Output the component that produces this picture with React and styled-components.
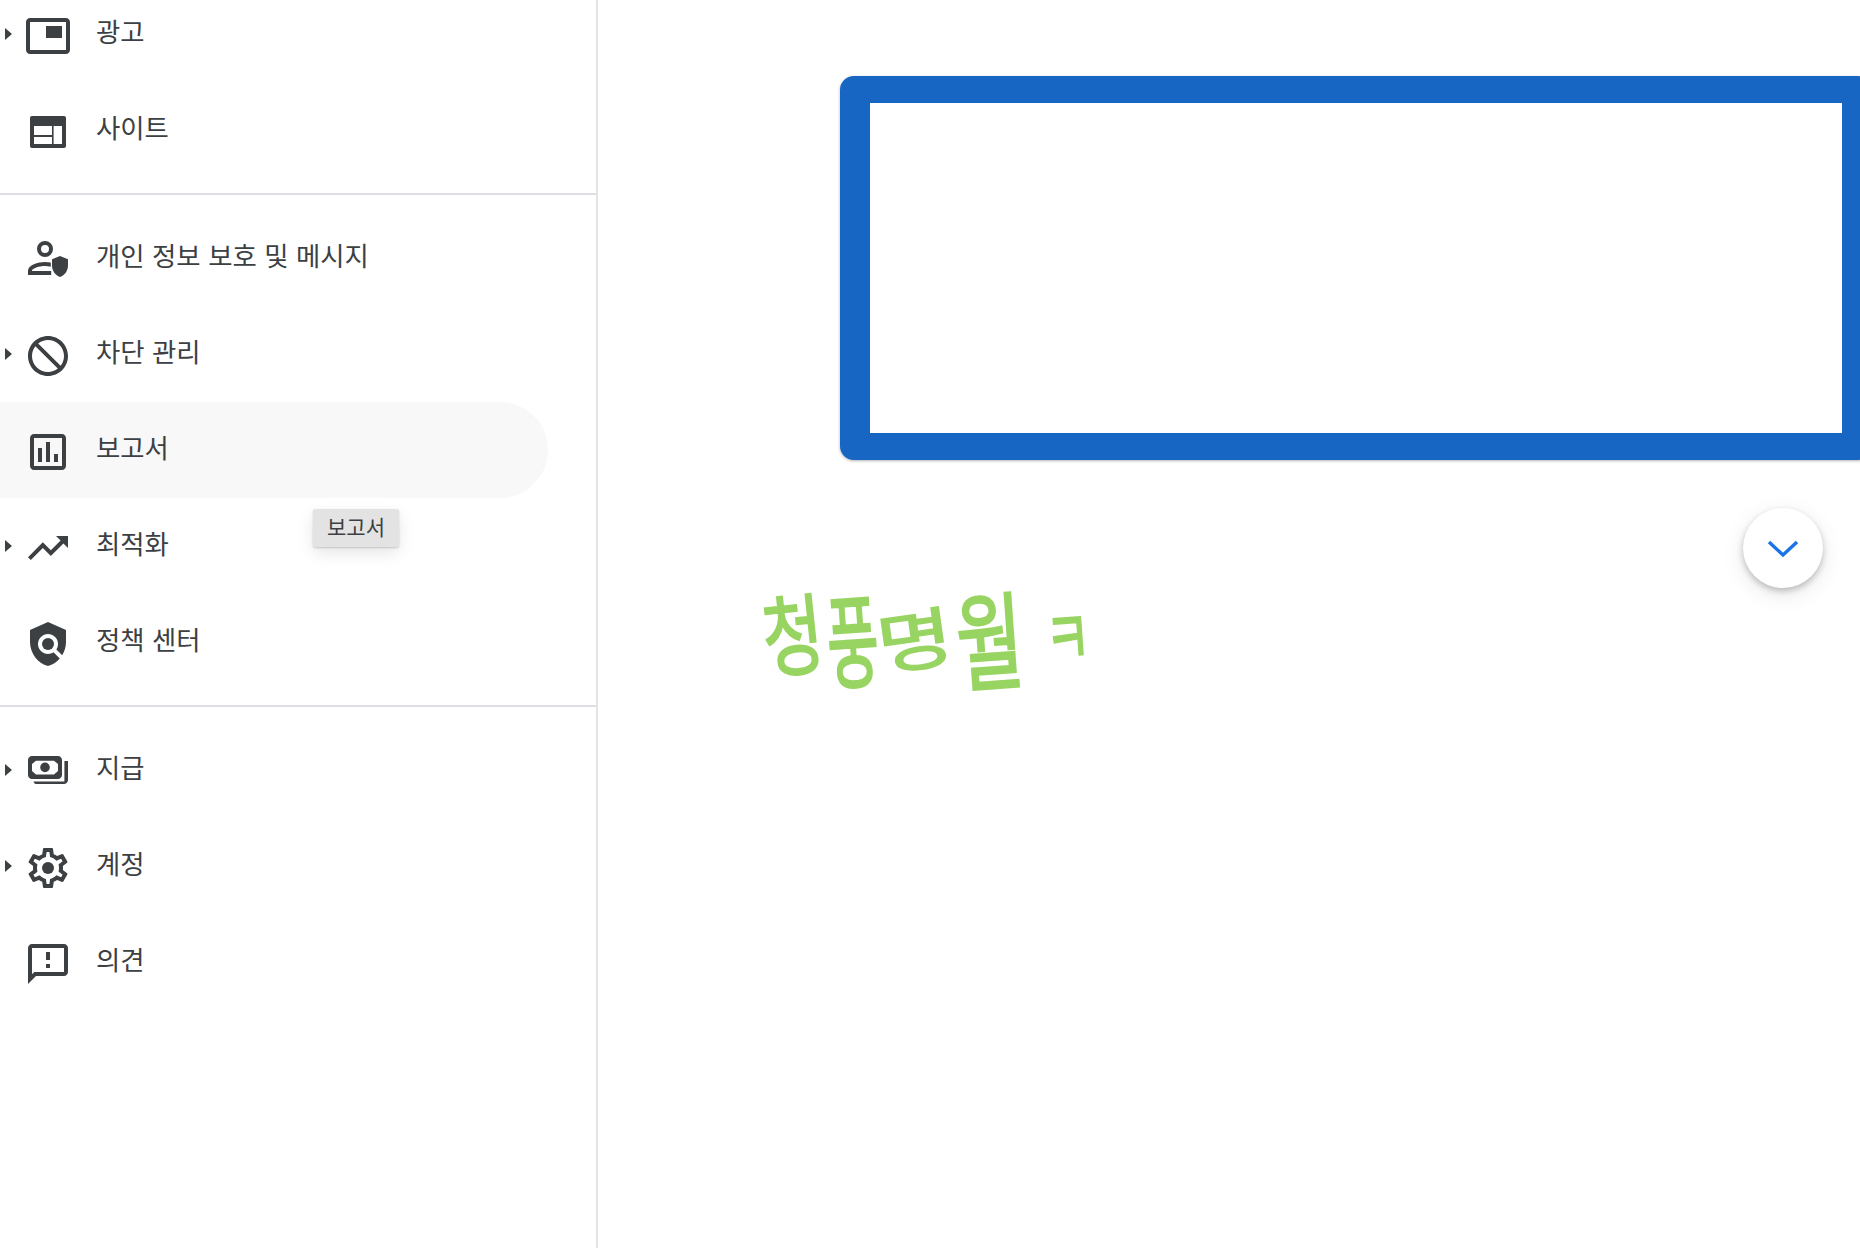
import React from "react";
import styled, { createGlobalStyle } from "styled-components";

const GlobalStyle = createGlobalStyle`
  html, body {
    margin: 0;
    height: 100%;
    background: #fff;
    overflow: hidden;
  }
  * {
    box-sizing: border-box;
  }
`;

const Page = styled.div`
  display: flex;
  width: 1860px;
  height: 1248px;
  overflow: hidden;
  font-family: "Noto Sans CJK KR", "Noto Sans", sans-serif;
  color: #3c4043;
`;
const Sidebar = styled.nav`
  flex: 0 0 598px;
  height: 100%;
  border-right: 2px solid #e3e4e8;
`;
// the page is scrolled a little, the first row is cut by the top edge
const Scrolled = styled.div`
  margin-top: -14px;
`;
const Divider = styled.hr`
  margin: 15px 0;
  border: 0;
  height: 2px;
  background: #dedde3;
`;
const Row = styled.a`
  position: relative;
  display: flex;
  align-items: center;
  width: 548px;
  height: 96px;
  padding-left: 5px;
  border-radius: 0 48px 48px 0;
  background: ${(p) => (p.$hover ? "#f8f8f8" : "transparent")};
`;
const ArrowSlot = styled.span`
  flex: 0 0 19px;
  height: 12px;
`;
const Arrow = styled.span`
  display: block;
  width: 0;
  height: 0;
  border-style: solid;
  border-width: 6px 0 6px 7px;
  border-color: transparent transparent transparent #3c4043;
`;
const Icon = styled.svg`
  flex: 0 0 48px;
  width: 48px;
  height: 48px;
  margin-top: 4px;
  fill: #3c4043;
`;
const Label = styled.span`
  margin-left: 24px;
  padding-bottom: 6px;
  font-size: 26.4px;
  line-height: 36px;
  word-spacing: 1.6px;
  white-space: nowrap;
`;
const Tooltip = styled.div`
  position: absolute;
  top: 107px;
  left: 313px;
  width: 86px;
  height: 38px;
  border-radius: 2px;
  background: #e3e3e3;
  box-shadow: 0 1px 2px rgba(0, 0, 0, 0.18), 0 6px 16px rgba(0, 0, 0, 0.1);
  font-size: 21px;
  line-height: 35px;
  text-align: center;
`;
const Main = styled.main`
  position: relative;
  flex: 1;
  padding: 76px 0 0 164px;
  overflow: hidden;
`;
const BlueBox = styled.div`
  width: 1032px;
  height: 384px;
  margin-left: 78px;
  border-style: solid;
  border-color: #1866c3;
  border-width: 27px 30px;
  border-radius: 14px;
  background: #fff;
  box-shadow: 0 1px 3px rgba(0, 0, 0, 0.3);
`;
const Fab = styled.button`
  position: absolute;
  top: 508px;
  right: 37px;
  display: flex;
  align-items: center;
  justify-content: center;
  width: 80px;
  height: 80px;
  padding: 0;
  border: 0;
  border-radius: 50%;
  background: #fff;
  box-shadow: 0 3px 6px rgba(0, 0, 0, 0.22), 0 6px 22px rgba(0, 0, 0, 0.1);
`;
const Scribble = styled.div`
  display: flex;
  align-items: center;
  height: 120px;
  margin-top: 112px;
  color: #98d462;
  font-size: 66px;
  font-weight: 400;
  line-height: 1;
  white-space: nowrap;
  -webkit-text-stroke: 1.5px #98d462;
`;
const Stroke = styled.span`
  display: inline-block;
  margin-left: ${(p) => p.$gap}px;
  transform: translateY(${(p) => p.$dy}px) rotate(${(p) => p.$rot}deg)
    scale(${(p) => p.$sx}, ${(p) => p.$sy});
`;

const paths = {
  ads: <path d="M19 7h-8v6h8V7zm2-4H3c-1.1 0-2 .9-2 2v14c0 1.1.9 1.98 2 1.98h18c1.1 0 2-.88 2-1.98V5c0-1.1-.9-2-2-2zm0 16.01H3V4.98h18v14.03z" />,
  site: (
    <path
      fillRule="evenodd"
      d="M4 4h16c.6 0 1 .4 1 1v14c0 .6-.4 1-1 1H4c-.6 0-1-.4-1-1V5c0-.6.4-1 1-1zm1 5v4.5h9V9H5zm0 5.5V18h9v-3.5H5zM14.8 9v9H19V9h-4.2z"
    />
  ),
  privacy: (
    <>
      <path
        fillRule="evenodd"
        d="M10.5 2.5a4 4 0 1 1 0 8 4 4 0 0 1 0-8zm0 2a2 2 0 1 0 0 4 2 2 0 0 0 0-4z"
      />
      <path d="M2 19.5v-2.2c0-2.7 5-4.3 8.5-4.3.9 0 1.9.1 2.9.3v2.1c-1-.3-2-.4-2.9-.4-3 0-6.5 1.2-6.5 2.3v.2h9.6v2H2z" />
      <path d="M18 10l4 1.6v3.2c0 2.7-1.7 5-4 5.7-2.3-.7-4-3-4-5.7v-3.2l4-1.6z" />
    </>
  ),
  block: (
    <path
      transform="matrix(-1 0 0 1 24 0)"
      d="M12 2C6.48 2 2 6.48 2 12s4.48 10 10 10 10-4.48 10-10S17.52 2 12 2zM4 12c0-4.42 3.58-8 8-8 1.85 0 3.55.63 4.9 1.69L5.69 16.9C4.63 15.55 4 13.85 4 12zm8 8c-1.85 0-3.55-.63-4.9-1.69L18.31 7.1C19.37 8.45 20 10.15 20 12c0 4.42-3.58 8-8 8z"
    />
  ),
  report: <path d="M19 3H5c-1.1 0-2 .9-2 2v14c0 1.1.9 2 2 2h14c1.1 0 2-.9 2-2V5c0-1.1-.9-2-2-2zm0 16H5V5h14v14zM7 10h2v7H7zm4-3h2v10h-2zm4 6h2v4h-2z" />,
  trend: <path d="M16 6l2.29 2.29-4.88 4.88-4-4L2 16.59 3.41 18l6-6 4 4 6.3-6.29L22 12V6z" />,
  policy: (
    <>
      <path d="M21 5l-9-4-9 4v6c0 5.55 3.84 10.74 9 12 2.3-.56 4.33-1.9 5.88-3.71l-3.12-3.12c-1.94 1.29-4.58 1.07-6.29-.64-1.95-1.95-1.95-5.12 0-7.07 1.95-1.95 5.12-1.95 7.07 0 1.71 1.71 1.92 4.35.64 6.29l2.9 2.9C20.29 15.69 21 13.38 21 11V5z" />
      <circle cx="12" cy="12" r="3" />
    </>
  ),
  payment: (
    <>
      <path
        fillRule="evenodd"
        d="M4 4h13c1.1 0 2 .9 2 2v7.5c0 1.1-.9 2-2 2H4c-1.1 0-2-.9-2-2V6c0-1.1.9-2 2-2zm2 2.4L4 8v3.5l2 1.7h9l2-1.7V8l-2-1.6H6zM10.5 7.3a2.4 2.4 0 1 1 0 4.8 2.4 2.4 0 0 1 0-4.8z"
      />
      <path d="M20.2 6.5H22V16c0 1.1-.9 2-2 2H6.5c-.9 0-1.6-.5-1.8-1.3h15.5V6.5z" />
    </>
  ),
  account: (
    <>
      <path d="M19.43 12.98c.04-.32.07-.64.07-.98 0-.34-.03-.66-.07-.98l2.11-1.65c.19-.15.24-.42.12-.64l-2-3.46c-.09-.16-.26-.25-.44-.25-.06 0-.12.01-.17.03l-2.49 1c-.52-.4-1.08-.73-1.69-.98l-.38-2.65C14.46 2.18 14.25 2 14 2h-4c-.25 0-.46.18-.49.42l-.38 2.65c-.61.25-1.17.59-1.69.98l-2.49-1c-.06-.02-.12-.03-.18-.03-.17 0-.34.09-.43.25l-2 3.46c-.13.22-.07.49.12.64l2.11 1.65c-.04.32-.07.65-.07.98 0 .33.03.66.07.98l-2.11 1.65c-.19.15-.24.42-.12.64l2 3.46c.09.16.26.25.44.25.06 0 .12-.01.17-.03l2.49-1c.52.4 1.08.73 1.69.98l.38 2.65c.03.24.24.42.49.42h4c.25 0 .46-.18.49-.42l.38-2.65c.61-.25 1.17-.59 1.69-.98l2.49 1c.06.02.12.03.18.03.17 0 .34-.09.43-.25l2-3.46c.12-.22.07-.49-.12-.64l-2.11-1.65zm-1.98-1.71c.04.31.05.52.05.73 0 .21-.02.43-.05.73l-.14 1.13.89.7 1.08.84-.7 1.21-1.27-.51-1.04-.42-.9.68c-.43.32-.84.56-1.25.73l-1.06.43-.16 1.13-.2 1.35h-1.4l-.19-1.35-.16-1.13-1.06-.43c-.43-.18-.83-.41-1.23-.71l-.91-.7-1.06.43-1.27.51-.7-1.21 1.08-.84.89-.7-.14-1.13c-.03-.31-.05-.54-.05-.74s.02-.43.05-.73l.14-1.13-.89-.7-1.08-.84.7-1.21 1.27.51 1.04.42.9-.68c.43-.32.84-.56 1.25-.73l1.06-.43.16-1.13.2-1.35h1.39l.19 1.35.16 1.13 1.06.43c.43.18.83.41 1.23.71l.91.7 1.06-.43 1.27-.51.7 1.21-1.07.85-.89.7.14 1.13z" />
      <circle cx="12" cy="12" r="3" />
    </>
  ),
  feedback: <path d="M20 2H4c-1.1 0-1.99.9-1.99 2L2 22l4-4h14c1.1 0 2-.9 2-2V4c0-1.1-.9-2-2-2zm0 14H5.17L4 17.17V4h16v12zM11 12h2v2h-2zm0-6h2v4h-2z" />,
};

const groups = [
  [
    { label: "광고", icon: "ads", arrow: true },
    { label: "사이트", icon: "site" },
  ],
  [
    { label: "개인 정보 보호 및 메시지", icon: "privacy" },
    { label: "차단 관리", icon: "block", arrow: true },
    { label: "보고서", icon: "report", hover: true, tip: "보고서" },
    { label: "최적화", icon: "trend", arrow: true },
    { label: "정책 센터", icon: "policy" },
  ],
  [
    { label: "지급", icon: "payment", arrow: true },
    { label: "계정", icon: "account", arrow: true },
    { label: "의견", icon: "feedback" },
  ],
];

const scribble = [
  { ch: "청", gap: 0, dy: -2, rot: -6, sx: 1, sy: 1.33 },
  { ch: "풍", gap: -1, dy: 3, rot: -4, sx: 0.85, sy: 1.55 },
  { ch: "명", gap: 2, dy: 4, rot: -8, sx: 1.25, sy: 1 },
  { ch: "월", gap: 14, dy: 3, rot: -4, sx: 1.1, sy: 1.6 },
  { ch: "ㅋ", gap: 17, dy: 0, rot: -4, sx: 0.75, sy: 1.15 },
];

const App = () => {
  return (
    <Page>
      <GlobalStyle />
      <Sidebar>
        <Scrolled>
          {groups.map((items, i) => (
            <React.Fragment key={i}>
              {i > 0 && <Divider />}
              {items.map((item) => (
                <Row key={item.label} $hover={item.hover}>
                  <ArrowSlot>{item.arrow && <Arrow />}</ArrowSlot>
                  <Icon viewBox="0 0 24 24">{paths[item.icon]}</Icon>
                  <Label>{item.label}</Label>
                  {item.tip && <Tooltip>{item.tip}</Tooltip>}
                </Row>
              ))}
            </React.Fragment>
          ))}
        </Scrolled>
      </Sidebar>
      <Main>
        <BlueBox />
        <Scribble>
          {scribble.map((s) => (
            <Stroke key={s.ch} $gap={s.gap} $dy={s.dy} $rot={s.rot} $sx={s.sx} $sy={s.sy}>
              {s.ch}
            </Stroke>
          ))}
        </Scribble>
        <Fab aria-label="더 보기">
          <svg width="32" height="32" viewBox="0 0 32 32" fill="none">
            <path d="M2 10l14 13L30 10" stroke="#1a73e8" strokeWidth="3.4" />
          </svg>
        </Fab>
      </Main>
    </Page>
  );
};

export default App;
